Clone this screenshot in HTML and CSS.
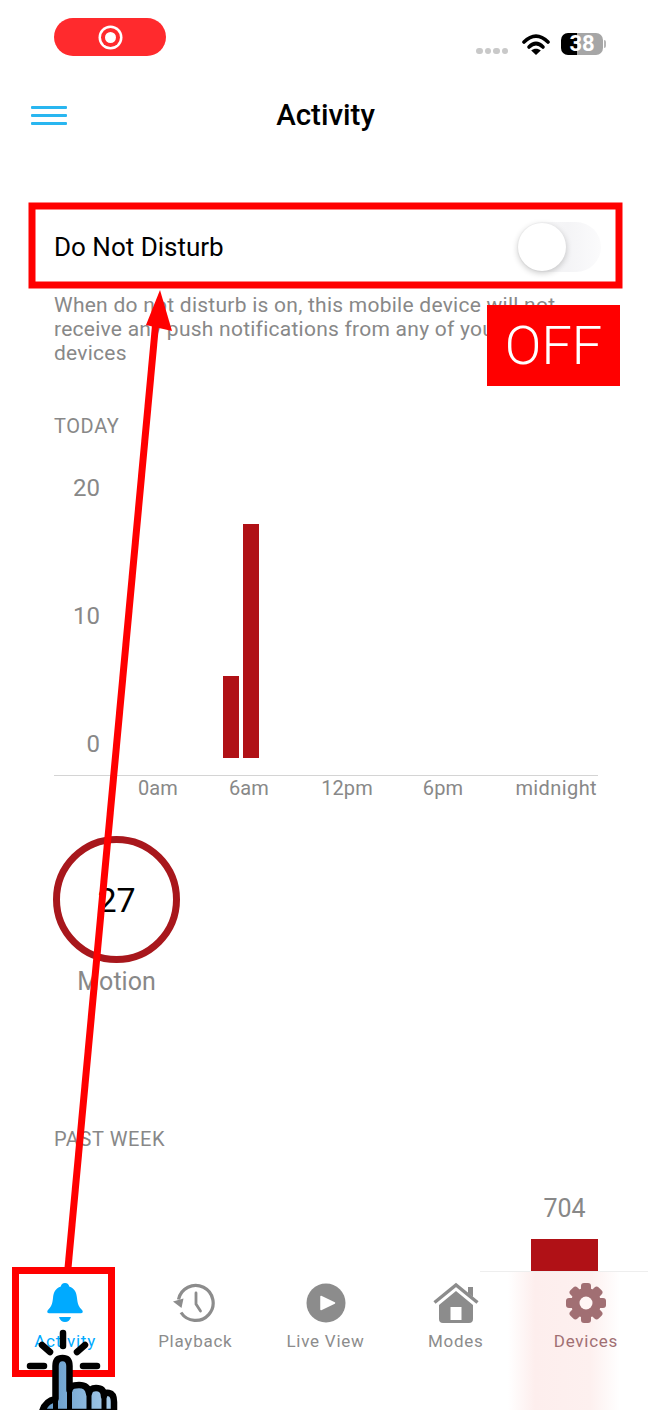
FILE: index.html
```html
<!DOCTYPE html>
<html lang="en">
<head>
    <meta charset="UTF-8">
    <meta name="viewport" content="width=device-width, initial-scale=1.0">
    <title>Activity</title>
    <link rel="stylesheet" href="styles.css">
</head>
<body>
<div class="app">
    <!-- Status bar -->
    <div class="status">
        <div class="rec-pill"><span class="rec-dot"></span></div>
        <div class="status-right">
            <div class="signal"><i></i><i></i><i></i><i></i></div>
            <svg class="wifi" width="28" height="21" viewBox="0 0 28 21">
                <path d="M2 8C10 0 18 0 26 8" fill="none" stroke="#000" stroke-width="3.6" stroke-linecap="round"/>
                <path d="M7 13c4.500-4.500 9.500-4.500 14 0" fill="none" stroke="#000" stroke-width="3.600" stroke-linecap="round"/>
                <path d="M14 21l-4.800-4.500c2.800-2.400 6.800-2.400 9.600 0z" fill="#000"/>
            </svg>
            <div class="battery"><span class="battery-num">38</span></div>
            <span class="battery-nub"></span>
        </div>
    </div>

    <!-- Nav -->
    <div class="nav">
        <div class="burger"><i></i><i></i><i></i></div>
        <div class="nav-title">Activity</div>
    </div>

    <div class="main">
        <div class="dnd-row">
            <span class="dnd-label">Do Not Disturb</span>
            <div class="toggle"><span class="knob"></span></div>
        </div>
        <p class="dnd-desc">When do not disturb is on, this mobile device will not receive any push notifications from any of your devices</p>

        <div class="section-label today-label">TODAY</div>

        <div class="chart">
            <div class="y-axis"><span>20</span><span>10</span><span>0</span></div>
            <div class="plot">
                <div class="bar bar-a"></div>
                <div class="bar bar-b"></div>
            </div>
        </div>
        <div class="x-axis">
            <span>0am</span><span>6am</span><span>12pm</span><span>6pm</span><span class="x-last">midnight</span>
        </div>

        <div class="ring">27</div>
        <div class="ring-label">Motion</div>

        <div class="section-label week-label">PAST WEEK</div>
        <div class="week">
            <div class="week-col">
                <span class="week-num">704</span>
                <div class="week-bar"></div>
            </div>
        </div>
    </div>

    <!-- Tab bar -->
    <div class="tabbar">
        <div class="tab active">
            <svg width="36" height="40" viewBox="0 0 36 40">
                <path fill="#00aaff" d="M18 0c-2.500 0-4 1.600-4.200 3.600C8.500 5.300 6.500 9.500 6 15c-.5 6-2 9-5 12-1.200 1.300-1 3.200 1 3.200h32c2 0 2.200-1.900 1-3.200-3-3-4.500-6-5-12-.5-5.500-2.500-9.700-7.800-11.400C22 1.600 20.500 0 18 0z"/>
                <path fill="#00aaff" d="M12 34h12c-.8 3-3 5-6 5s-5.200-2-6-5z"/>
            </svg>
            <span>Activity</span>
        </div>
        <div class="tab">
            <svg width="44" height="40" viewBox="0 0 44 40">
                <path d="M5.500 16.500A17.500 17.500 0 1 1 8 29.500" fill="none" stroke="#8c8c8c" stroke-width="3.200"/>
                <path d="M0 18.500l10.500-3 -2 9.500z" fill="#8c8c8c"/>
                <path d="M23 10v11l4.500 7" fill="none" stroke="#8c8c8c" stroke-width="2.800" stroke-linecap="round"/>
            </svg>
            <span>Playback</span>
        </div>
        <div class="tab">
            <svg width="40" height="40" viewBox="0 0 40 40">
                <circle cx="20" cy="20" r="19.500" fill="#8c8c8c"/>
                <path d="M15 13.500L28.500 20 15 26.500z" fill="#fff" stroke="#fff" stroke-width="1.500" stroke-linejoin="round"/>
            </svg>
            <span>Live View</span>
        </div>
        <div class="tab">
            <svg width="46" height="40" viewBox="0 0 46 40">
                <path d="M1.500 19.500L23 2l21.500 17.500" fill="none" stroke="#8c8c8c" stroke-width="3.400"/>
                <path d="M35 4h5v10l-5-4z" fill="#8c8c8c"/>
                <path fill-rule="evenodd" fill="#8c8c8c" d="M23 8l17 14v14a4 4 0 0 1-4 4H10a4 4 0 0 1-4-4V22zM17.500 24v13h11V24z"/>
            </svg>
            <span>Modes</span>
        </div>
        <div class="tab tinted">
            <svg width="42" height="42" viewBox="0 0 42 42">
                <g fill="#a16f73">
                    <circle cx="21" cy="21" r="15"/>
                    <rect x="16" y="1" width="10" height="40" rx="3"/>
                    <rect x="16" y="1" width="10" height="40" rx="3" transform="rotate(45 21 21)"/>
                    <rect x="16" y="1" width="10" height="40" rx="3" transform="rotate(90 21 21)"/>
                    <rect x="16" y="1" width="10" height="40" rx="3" transform="rotate(135 21 21)"/>
                </g>
                <circle cx="21" cy="21" r="6.500" fill="#fff6f5"/>
            </svg>
            <span>Devices</span>
        </div>
    </div>

    <!-- Annotations drawn over the screenshot -->
    <div class="off-badge">OFF</div>
    <svg class="marks" width="651" height="1410" viewBox="0 0 651 1410">
        <defs>
            <linearGradient id="handFill" x1="0" y1="0" x2="1" y2="0">
                <stop offset="0" stop-color="#5f97c8"/>
                <stop offset="1" stop-color="#a9cdea"/>
            </linearGradient>
        </defs>
        <rect x="32" y="206" width="587" height="79" fill="none" stroke="#ff0000" stroke-width="7"/>
        <rect x="15.500" y="1270.500" width="96" height="103" fill="none" stroke="#ff0000" stroke-width="7"/>
        <path d="M68 1268L156 320" stroke="#ff0000" stroke-width="7" fill="none"/>
        <path d="M160 290L172 331 146 325z" fill="#ff0000"/>

        <g stroke="#000" stroke-width="6.500" stroke-linecap="round" fill="none">
            <path d="M63 1333v13"/>
            <path d="M42 1345l8 7"/>
            <path d="M85 1345l-8 7"/>
            <path d="M30 1366h14"/>
            <path d="M83 1366h14"/>
        </g>
        <path d="M42 1412Q45 1401 55.500 1399V1366Q55.500 1358 62.500 1358 69.500 1358 69.500 1366V1390Q70 1385 79 1385 88 1385 89 1393 90 1388 96 1388 104 1388 104 1396 105 1392 109 1393 114 1394 114 1402V1412z" fill="url(#handFill)" stroke="#000" stroke-width="6.500" stroke-linejoin="round"/>
        <g stroke="#000" stroke-width="5" fill="none">
            <path d="M55.500 1398v14"/>
            <path d="M69.500 1388v24"/>
            <path d="M89 1392v20"/>
            <path d="M104 1395v17"/>
        </g>
    </svg>
</div>
</body>
</html>
```

FILE: styles.css
```css
/* General */
html, body {
    margin: 0;
    padding: 0;
}

body {
    font-family: 'Roboto', sans-serif;
    background-color: #ffffff;
    color: #000;
}

.app {
    position: relative;
    width: 651px;
    height: 1410px;
    overflow: hidden;
    display: flex;
    flex-direction: column;
    background-color: #ffffff;
}

/* Status bar */
.status {
    height: 88px;
    box-sizing: border-box;
    padding: 18px 45px 0 54px;
    display: flex;
    justify-content: space-between;
    align-items: flex-start;
}

.rec-pill {
    width: 112px;
    height: 38px;
    border-radius: 19px;
    background-color: #ff2a2d;
    display: flex;
    justify-content: center;
    align-items: center;
}

.rec-dot {
    width: 11px;
    height: 11px;
    border-radius: 50%;
    background-color: #fff;
    box-shadow: 0 0 0 4px #ff2a2d, 0 0 0 6.5px #fff;
}

.status-right {
    display: flex;
    align-items: flex-end;
    margin-top: 15px;
}

.signal {
    display: flex;
    gap: 2px;
    margin-right: 14px;
    margin-bottom: 1px;
}

.signal i {
    width: 6.500px;
    height: 6.500px;
    border-radius: 50%;
    background-color: #c9c9c9;
}

.wifi {
    margin-right: 11px;
}

.battery {
    width: 42px;
    height: 22px;
    border-radius: 7px;
    background: linear-gradient(90deg, #000 0, #000 38%, #a6a6a6 38%);
    color: #fff;
    font-size: 22px;
    font-weight: 700;
    line-height: 22px;
    text-align: center;
}

.battery-nub {
    width: 2px;
    height: 8px;
    margin: 0 0 7px 1px;
    border-radius: 0 2px 2px 0;
    background-color: #b5b5b5;
}

/* Nav */
.nav {
    height: 54px;
    position: relative;
    display: flex;
    justify-content: center;
    align-items: center;
}

.nav-title {
    font-size: 29.5px;
    font-weight: 500;
}

.burger {
    position: absolute;
    left: 31px;
    top: 18px;
    width: 36px;
    display: flex;
    flex-direction: column;
    gap: 5.500px;
}

.burger i {
    height: 2.500px;
    border-radius: 1px;
    background-color: #29b6f0;
}

/* Main content */
.main {
    flex: 1;
    min-height: 0;
    overflow: hidden;
    padding: 80px 53px 0 54px;
}

.dnd-row {
    height: 50px;
    display: flex;
    justify-content: space-between;
    align-items: center;
}

.dnd-label {
    font-size: 26px;
}

.toggle {
    width: 84px;
    height: 50px;
    margin-right: -3px;
    border-radius: 25px;
    background: linear-gradient(90deg, #fafafa, #f4f4f6 60%, #fbfbfc);
}

.knob {
    display: block;
    width: 48px;
    height: 48px;
    margin: 1px 0 0 1px;
    border-radius: 50%;
    background-color: #fff;
    box-shadow: 0 2px 6px rgba(0, 0, 0, 0.22);
}

.dnd-desc {
    width: 510px;
    margin: 21px 0 0;
    font-size: 21px;
    letter-spacing: 0.25px;
    line-height: 24px;
    color: #888888;
}

.section-label {
    font-size: 20px;
    letter-spacing: 0.6px;
    line-height: 24px;
    color: #888888;
}

.today-label {
    margin-top: 49px;
}

/* Today chart */
.chart {
    height: 322px;
    margin-top: 38px;
    display: flex;
}

.y-axis {
    width: 46px;
    height: 284px;
    margin-top: -2px;
    display: flex;
    flex-direction: column;
    justify-content: space-between;
    align-items: flex-end;
    font-size: 24px;
    line-height: 28px;
    color: #888888;
}

.plot {
    flex: 1;
    height: 282px;
    display: flex;
    align-items: flex-end;
    gap: 4px;
    padding-left: 123px;
    box-sizing: border-box;
}

.bar {
    width: 16px;
    background-color: #b01116;
}

.bar-a {
    height: 82px;
}

.bar-b {
    height: 234px;
}

.x-axis {
    border-top: 1px solid #d4d4d4;
    height: 26px;
    margin-top: -23px;
    padding-left: 64px;
    display: grid;
    grid-template-columns: 80px 102px 94px 98px 106px;
    justify-items: center;
    font-size: 20px;
    letter-spacing: 0.1px;
    line-height: 24px;
    color: #888888;
}

.x-last {
    justify-self: end;
    margin-right: 1px;
    letter-spacing: 0.4px;
}

/* Motion count */
.ring {
    width: 127px;
    height: 127px;
    box-sizing: border-box;
    margin: 34px 0 0 -1px;
    border: 7px solid #a8171c;
    border-radius: 50%;
    display: flex;
    justify-content: center;
    align-items: center;
    font-size: 34px;
}

.ring-label {
    width: 125px;
    margin-top: 4px;
    text-align: center;
    font-size: 25px;
    line-height: 30px;
    color: #888888;
}

.week-label {
    margin-top: 130px;
}

.week {
    display: flex;
    justify-content: flex-end;
    margin-top: 43px;
}

.week-col {
    width: 67px;
    display: flex;
    flex-direction: column;
    align-items: center;
}

.week-num {
    font-size: 25px;
    line-height: 30px;
    color: #888888;
}

.week-bar {
    width: 67px;
    height: 40px;
    margin-top: 15px;
    background-color: #b01116;
}

/* Tab bar */
.tabbar {
    position: relative;
    height: 139px;
    flex-shrink: 0;
    display: flex;
    background-color: #ffffff;
    background-image:
        linear-gradient(90deg, transparent 480px, #eeeeee 480px, #eeeeee 648px, transparent 648px),
        linear-gradient(90deg, rgba(253, 238, 237, 0) 508px, #fdeeed 535px, #fdf0ef 590px, rgba(253, 238, 237, 0) 620px);
    background-size: 100% 1px, 100% 100%;
    background-repeat: no-repeat;
}

.tab {
    flex: 1;
    height: 100%;
    box-sizing: border-box;
    padding-top: 11px;
    display: flex;
    flex-direction: column;
    align-items: center;
    font-size: 17px;
    letter-spacing: 0.75px;
    color: #8c8c8c;
}

.tab svg {
    height: 42px;
    display: block;
}

.tab span {
    margin-top: 5px;
    line-height: 24px;
}

.tab.active {
    color: #00aaff;
}

.tab.tinted {
    color: #a16f73;
}

/* Annotations */
.off-badge {
    position: absolute;
    left: 487px;
    top: 305px;
    width: 133px;
    height: 81px;
    display: flex;
    justify-content: center;
    align-items: center;
    background-color: #ff0000;
    color: #fff;
    font-size: 54px;
    font-weight: 300;
}

.marks {
    position: absolute;
    left: 0;
    top: 0;
    pointer-events: none;
}
```
